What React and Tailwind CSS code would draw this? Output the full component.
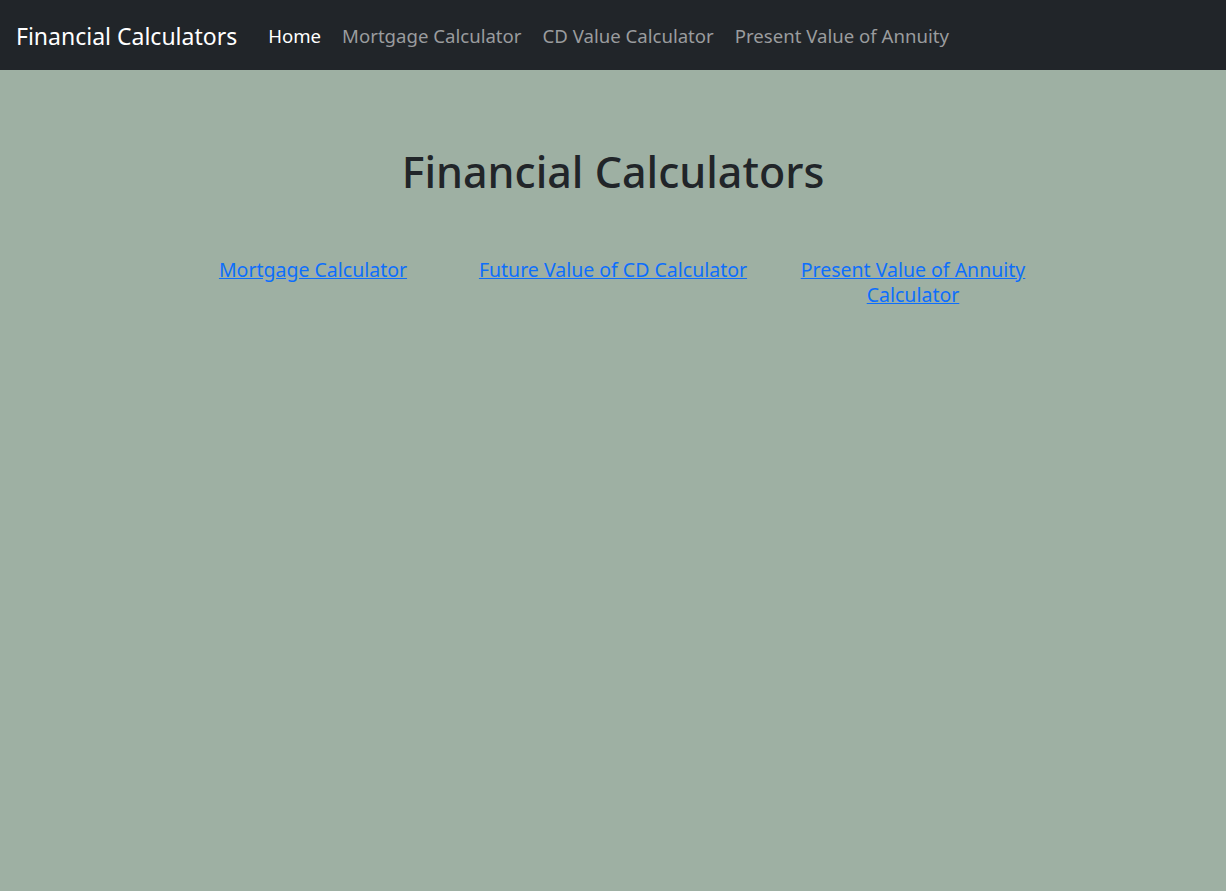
export default function App() {
  const navLinks = ["Mortgage Calculator", "CD Value Calculator", "Present Value of Annuity"];
  const cards = [
    "Mortgage Calculator",
    "Future Value of CD Calculator",
    "Present Value of Annuity Calculator",
  ];

  return (
    <div className="min-h-[891px] bg-[#9eb0a3] font-['Noto_Sans',sans-serif] text-[#212529]">
      {/* top navbar */}
      <nav className="h-[70px] bg-[#212529] flex items-center px-4 pt-[2px]">
        <a href="#" className="text-white text-[23px] leading-[30px] mr-[31px]">
          Financial Calculators
        </a>
        <div className="flex items-center gap-[21px] text-[18.6px] leading-[24px]">
          <a href="#" className="text-white">Home</a>
          {navLinks.map((l) => (
            <a key={l} href="#" className="text-[#9a9c9e]">
              {l}
            </a>
          ))}
        </div>
      </nav>

      <main className="pt-[76px]">
        <h1 className="text-center text-[43px] leading-[52px] font-medium">Financial Calculators</h1>

        <div className="mt-[60px] mx-auto w-[900px] grid grid-cols-3">
          {cards.map((c) => (
            <div key={c} className="px-3 text-center">
              <a href="#" className="text-[#0d6efd] underline text-[19.5px] leading-[24px]">
                {c}
              </a>
            </div>
          ))}
        </div>
      </main>
    </div>
  );
}
